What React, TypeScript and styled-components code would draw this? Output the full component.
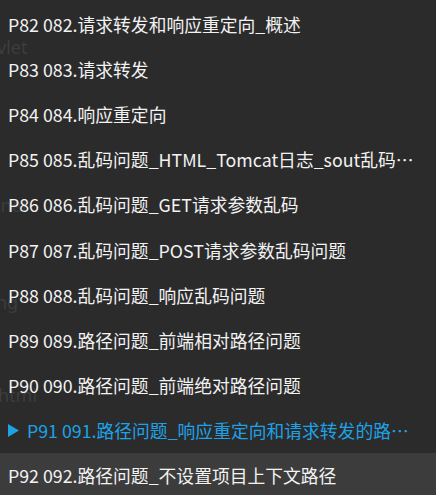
import React from "react";
import styled, { createGlobalStyle } from "styled-components";

const Global = createGlobalStyle`
  html, body { margin: 0; padding: 0; background: #2b2b2b; }
  body { width: 436px; height: 495px; overflow: hidden; }
`;

const Page = styled.div`
  position: relative;
  width: 436px;
  height: 495px;
  overflow: hidden;
  background: #2b2b2b;
  font-family: "Noto Sans CJK SC", "Noto Sans", sans-serif;
`;

const Backdrop = styled.div`
  position: absolute;
  inset: 0;
  display: grid;
  grid-template-rows: 37px 20px 138px 20px 77px 20px 73px 20px 1fr;
`;

const Ghost = styled.span<{ $row: number; $shift?: number }>`
  grid-row: ${(p) => p.$row};
  margin-left: ${(p) => p.$shift ?? -3}px;
  font-family: "Noto Sans", sans-serif;
  font-size: 18px;
  line-height: 20px;
  color: #3d3d3d;
  white-space: nowrap;
`;

const List = styled.ul`
  position: relative;
  list-style: none;
  margin: 0;
  padding: 1px 0 0;
  display: flex;
  flex-direction: column;
`;

const Row = styled.li<{ $active?: boolean; $hover?: boolean }>`
  height: 45.2px;
  display: flex;
  align-items: center;
  padding: 0 12px 0 8px;
  background: ${(p) => (p.$hover ? "#3c3c3c" : "transparent")};
  color: ${(p) => (p.$active ? "#1ea2e6" : "#f2f2f2")};
  font-size: 17.8px;
  white-space: nowrap;
  box-sizing: border-box;
`;

const Label = styled.span`
  overflow: hidden;
  text-overflow: ellipsis;
  white-space: nowrap;
  min-width: 0;
`;

const Arrow = styled.svg`
  flex: none;
  width: 11px;
  height: 13px;
  margin-right: 8px;
`;

const items = [
  "P82 082.请求转发和响应重定向_概述",
  "P83 083.请求转发",
  "P84 084.响应重定向",
  "P85 085.乱码问题_HTML_Tomcat日志_sout乱码问题",
  "P86 086.乱码问题_GET请求参数乱码",
  "P87 087.乱码问题_POST请求参数乱码问题",
  "P88 088.乱码问题_响应乱码问题",
  "P89 089.路径问题_前端相对路径问题",
  "P90 090.路径问题_前端绝对路径问题",
  "P91 091.路径问题_响应重定向和请求转发的路径问题",
  "P92 092.路径问题_不设置项目上下文路径",
];

export default function App() {
  return (
    <>
      <Global />
      <Page>
        <Backdrop>
          <Ghost $row={2}>vlet</Ghost>
          <Ghost $row={4} $shift={-6}>tner</Ghost>
          <Ghost $row={6} $shift={-4}>ng</Ghost>
          <Ghost $row={8} $shift={-2}>html</Ghost>
        </Backdrop>
        <List>
          {items.map((t, i) => (
            <Row key={t} $active={i === 9} $hover={i === 10}>
              {i === 9 && (
                <Arrow viewBox="0 0 11 13">
                  <path d="M0 0 L11 6.5 L0 13 Z" fill="#1ea2e6" />
                </Arrow>
              )}
              <Label>{t}</Label>
            </Row>
          ))}
        </List>
      </Page>
    </>
  );
}
